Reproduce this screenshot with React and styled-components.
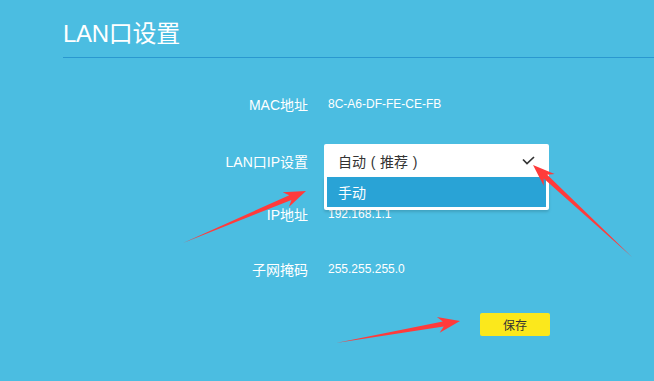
import React from "react";
import styled, { createGlobalStyle } from "styled-components";

const Global = createGlobalStyle`
  html, body { margin: 0; padding: 0; background: #4bbde1; }
  body { font-family: "Liberation Sans", "Noto Sans CJK SC", sans-serif; }
`;

const Page = styled.div`
  position: relative;
  width: 654px;
  height: 381px;
  overflow: hidden;
  background: #4bbde1;
`;

const Header = styled.div`
  margin-left: 63px;
  padding: 18px 0 7px;
  border-bottom: 1px solid #2a98cf;
`;

const Title = styled.h1`
  margin: 0;
  font-size: 24px;
  line-height: 32px;
  font-weight: normal;
  color: #ffffff;
  letter-spacing: -0.3px;
`;

const Form = styled.div`
  display: flex;
  flex-direction: column;
  padding-top: 29px;
`;

const Row = styled.div`
  display: grid;
  grid-template-columns: 308px 1fr;
  column-gap: 16px;
  align-items: center;
  height: ${(p) => p.$h || 33}px;
  margin-top: ${(p) => p.$mt || 0}px;
`;

const Label = styled.div`
  text-align: right;
  font-size: 14px;
  color: #ffffff;
  white-space: nowrap;
`;

const Value = styled.div`
  padding-left: 4px;
  font-size: 12px;
  color: #ffffff;
`;

const Select = styled.div`
  position: relative;
  width: 225px;
  height: 33px;
  box-sizing: border-box;
  display: flex;
  align-items: center;
  justify-content: space-between;
  padding: 0 14px;
  background: #ffffff;
  border-radius: 2px 2px 0 0;
  font-size: 14px;
  color: #333333;
  z-index: 2;
`;

const Paren = styled.span`
  display: inline-block;
  width: 14px;
  text-align: center;
  font-family: "Liberation Sans", sans-serif;
`;

const Menu = styled.div`
  position: absolute;
  top: 33px;
  left: 0;
  width: 225px;
  box-sizing: border-box;
  padding: 0 3px 3px;
  background: #ffffff;
  border-radius: 0 0 2px 2px;
  box-shadow: 0 2px 3px rgba(0, 0, 0, 0.15);
`;

const Option = styled.div`
  height: 30px;
  display: flex;
  align-items: center;
  padding-left: 11px;
  background: ${(p) => (p.$active ? "#29a3d6" : "#ffffff")};
  color: ${(p) => (p.$active ? "#ffffff" : "#333333")};
  font-size: 14px;
`;

const SaveButton = styled.button`
  margin-left: 156px;
  width: 70px;
  height: 23px;
  border: none;
  border-radius: 2px;
  background: #fbe81c;
  color: #333333;
  font-family: inherit;
  font-size: 12px;
  padding: 0;
`;

const Overlay = styled.svg`
  position: absolute;
  left: 0;
  top: 0;
  pointer-events: none;
  z-index: 5;
`;

function arrowPoints([tx, ty], [px, py], L = 22, W = 8, w = 2.6) {
  const dx = px - tx;
  const dy = py - ty;
  const len = Math.hypot(dx, dy);
  const ux = dx / len;
  const uy = dy / len;
  const nx = -uy;
  const ny = ux;
  const bx = px - ux * L;
  const by = py - uy * L;
  const nbx = px - ux * (L - 5);
  const nby = py - uy * (L - 5);
  const pts = [
    [tx, ty],
    [nbx + nx * w, nby + ny * w],
    [bx + nx * W, by + ny * W],
    [px, py],
    [bx - nx * W, by - ny * W],
    [nbx - nx * w, nby - ny * w],
  ];
  return pts.map((p) => p.map((v) => v.toFixed(1)).join(",")).join(" ");
}

const arrows = [
  { tail: [183, 243], tip: [306, 191] },
  { tail: [632, 257], tip: [533, 165] },
  { tail: [336, 343], tip: [460, 321] },
];

export default function App() {
  return (
    <Page>
      <Global />
      <Header>
        <Title>LAN口设置</Title>
      </Header>
      <Form>
        <Row>
          <Label>MAC地址</Label>
          <Value>8C-A6-DF-FE-CE-FB</Value>
        </Row>
        <Row $mt={24}>
          <Label>LAN口IP设置</Label>
          <div>
            <Select>
              <span>
                自动<Paren>(</Paren>推荐<Paren>)</Paren>
              </span>
              <svg width="13" height="9" viewBox="0 0 13 9">
                <polyline
                  points="1,3.5 5,7.5 12,1"
                  fill="none"
                  stroke="#333"
                  strokeWidth="1.7"
                />
              </svg>
              <Menu>
                <Option $active>手动</Option>
              </Menu>
            </Select>
          </div>
        </Row>
        <Row $mt={20}>
          <Label>IP地址</Label>
          <Value>192.168.1.1</Value>
        </Row>
        <Row $mt={22}>
          <Label>子网掩码</Label>
          <Value>255.255.255.0</Value>
        </Row>
        <Row $mt={28} $h={23}>
          <span />
          <div>
            <SaveButton>保存</SaveButton>
          </div>
        </Row>
      </Form>
      <Overlay width="654" height="381" viewBox="0 0 654 381">
        {arrows.map((a, i) => (
          <polygon key={i} points={arrowPoints(a.tail, a.tip)} fill="#ff3b3b" />
        ))}
      </Overlay>
    </Page>
  );
}
